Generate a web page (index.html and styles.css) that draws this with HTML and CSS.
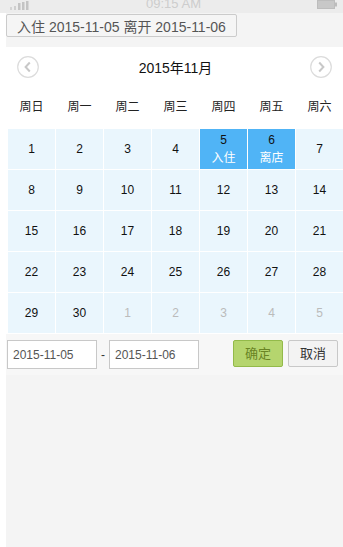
FILE: index.html
```html
<!DOCTYPE html>
<html lang="zh-CN">
<head>
  <meta charset="UTF-8" />
  <meta name="viewport" content="width=device-width, initial-scale=1.0" />
  <title>选择日期</title>
  <link rel="stylesheet" href="styles.css">
</head>
<body>
  <div class="status-bar">
    <svg class="signal" width="20" height="9" viewBox="0 0 20 9">
      <rect x="0" y="6" width="2" height="3" fill="#d4d4d4"/>
      <rect x="4" y="5" width="2" height="4" fill="#cfcfcf"/>
      <rect x="8" y="2" width="2.5" height="7" fill="#c4c4c4"/>
      <rect x="12" y="1" width="2.5" height="8" fill="#c4c4c4"/>
      <rect x="16" y="0" width="2.5" height="9" fill="#c4c4c4"/>
    </svg>
    <span class="time">09:15 AM</span>
    <svg class="battery" width="20" height="9" viewBox="0 0 20 9">
      <rect x="0.5" y="0.5" width="17" height="8" fill="#c8c8c8" stroke="#bdbdbd"/>
      <rect x="18" y="2.5" width="2" height="4" fill="#bdbdbd"/>
    </svg>
  </div>

  <div class="page">
    <div class="toolbar">
      <button class="range-btn">入住 2015-11-05 离开 2015-11-06</button>
    </div>

    <div class="calendar">
      <div class="cal-head">
        <a class="arrow" href="javascript:void(0)">
          <svg width="22" height="22" viewBox="0 0 22 22">
            <circle cx="11" cy="11" r="10.3" fill="#fff" stroke="#dcdcdc" stroke-width="1.2"/>
            <path d="M12.8 6.5 L8.6 11 L12.8 15.5" fill="none" stroke="#c8c8c8" stroke-width="2"/>
          </svg>
        </a>
        <div class="cal-title">2015年11月</div>
        <a class="arrow" href="javascript:void(0)">
          <svg width="22" height="22" viewBox="0 0 22 22">
            <circle cx="11" cy="11" r="10.3" fill="#fff" stroke="#dcdcdc" stroke-width="1.2"/>
            <path d="M9.2 6.5 L13.4 11 L9.2 15.5" fill="none" stroke="#c8c8c8" stroke-width="2"/>
          </svg>
        </a>
      </div>

      <ul class="week">
        <li>周日</li><li>周一</li><li>周二</li><li>周三</li><li>周四</li><li>周五</li><li>周六</li>
      </ul>

      <ul class="days">
        <li>1</li>
        <li>2</li>
        <li>3</li>
        <li>4</li>
        <li class="on"><span>5</span><em>入住</em></li>
        <li class="on"><span>6</span><em>离店</em></li>
        <li>7</li>
        <li>8</li>
        <li>9</li>
        <li>10</li>
        <li>11</li>
        <li>12</li>
        <li>13</li>
        <li>14</li>
        <li>15</li>
        <li>16</li>
        <li>17</li>
        <li>18</li>
        <li>19</li>
        <li>20</li>
        <li>21</li>
        <li>22</li>
        <li>23</li>
        <li>24</li>
        <li>25</li>
        <li>26</li>
        <li>27</li>
        <li>28</li>
        <li>29</li>
        <li>30</li>
        <li class="other">1</li>
        <li class="other">2</li>
        <li class="other">3</li>
        <li class="other">4</li>
        <li class="other">5</li>
      </ul>
    </div>

    <div class="cal-foot">
      <input class="date-input" type="text" value="2015-11-05" />
      <span class="dash">-</span>
      <input class="date-input" type="text" value="2015-11-06" />
      <a class="btn btn-ok" href="javascript:void(0)">确定</a>
      <a class="btn btn-cancel" href="javascript:void(0)">取消</a>
    </div>
  </div>
</body>
</html>
```

FILE: styles.css
```css
html, body, div, ul, li {
  padding: 0;margin: 0;
}
ul, ol {
  list-style: none;
}
a {
  color: inherit;
  text-decoration: inherit;
}
em {
  font-style: normal;
}

body {
  background-color: #fff;
  font-family: "Liberation Sans", "Noto Sans CJK SC", sans-serif;
  font-size: 12px;
  color: #111;
}

.status-bar {
  height: 13px;
  background-color: #ececec;
  display: flex;
  align-items: flex-start;
  justify-content: space-between;
  padding: 0 6px 0 10px;
  overflow: hidden;
}
.status-bar .signal {
  margin-top: 1px;
}
.status-bar .time {
  font-size: 13px;
  line-height: 13px;
  color: #cdcdcd;
  margin-top: -3px;
}
.status-bar .battery {
  margin-top: 0;
}

.page {
  margin-left: 6px;
  min-height: 534px;
  background-color: #f4f4f4;
}

.toolbar {
  padding: 1px 0 10px;
}
.range-btn {
  height: 23px;
  width: 231px;
  padding: 0;
  border: 1px solid #cbcbcb;
  border-radius: 2px;
  background-color: #f5f5f5;
  font-family: "Liberation Sans", "Noto Sans CJK SC", sans-serif;
  font-size: 14px;
  color: #555;
  text-align: center;
}

.calendar {
  background-color: #fff;
  padding: 0 0 1px 2px;
}

.cal-head {
  height: 40px;
  display: flex;
  align-items: center;
  justify-content: space-between;
  padding: 0 11px 0 9px;
}
.cal-head .arrow {
  width: 22px;
  height: 22px;
  display: block;
}
.cal-head .arrow svg {
  display: block;
}
.cal-title {
  font-size: 14px;
  color: #111;
  padding-left: 2px;
}

.week {
  display: grid;
  grid-template-columns: repeat(7, 47px);
  column-gap: 1px;
  height: 40px;
  margin-bottom: 2px;
}
.week li {
  line-height: 40px;
  text-align: center;
  font-size: 12px;
  color: #222;
}

.days {
  display: grid;
  grid-template-columns: repeat(7, 47px);
  grid-auto-rows: 40px;
  gap: 1px;
}
.days li {
  background-color: #eaf6fd;
  display: flex;
  flex-direction: column;
  align-items: center;
  justify-content: center;
  font-size: 12px;
  color: #111;
}
.days li.on {
  background-color: #50b4f6;
  line-height: 18px;
}
.days li.on em {
  color: #fff;
  font-size: 12px;
}
.days li.other {
  color: #bbb;
}

.cal-foot {
  height: 41px;
  background-color: #f7f7f7;
  display: flex;
  align-items: center;
  padding-left: 1px;
}
.date-input {
  width: 90px;
  height: 29px;
  box-sizing: border-box;
  border: 1px solid #c8c8c8;
  background-color: #fff;
  padding: 0 5px;
  margin: 0;
  font-family: "Liberation Sans", "Noto Sans CJK SC", sans-serif;
  font-size: 12px;
  color: #555;
  outline: none;
}
.dash {
  width: 12px;
  text-align: center;
  color: #333;
}

.btn {
  width: 50px;
  height: 27px;
  box-sizing: border-box;
  line-height: 25px;
  text-align: center;
  font-size: 13px;
  border-radius: 2px;
  margin-bottom: 2px;
}
.btn-ok {
  margin-left: 34px;
  background-color: #b5d56e;
  border: 1px solid #93ba4a;
  color: #6a8424;
}
.btn-cancel {
  margin-left: 5px;
  background-color: #f3f3f3;
  border: 1px solid #c8c8c8;
  color: #333;
}
```
